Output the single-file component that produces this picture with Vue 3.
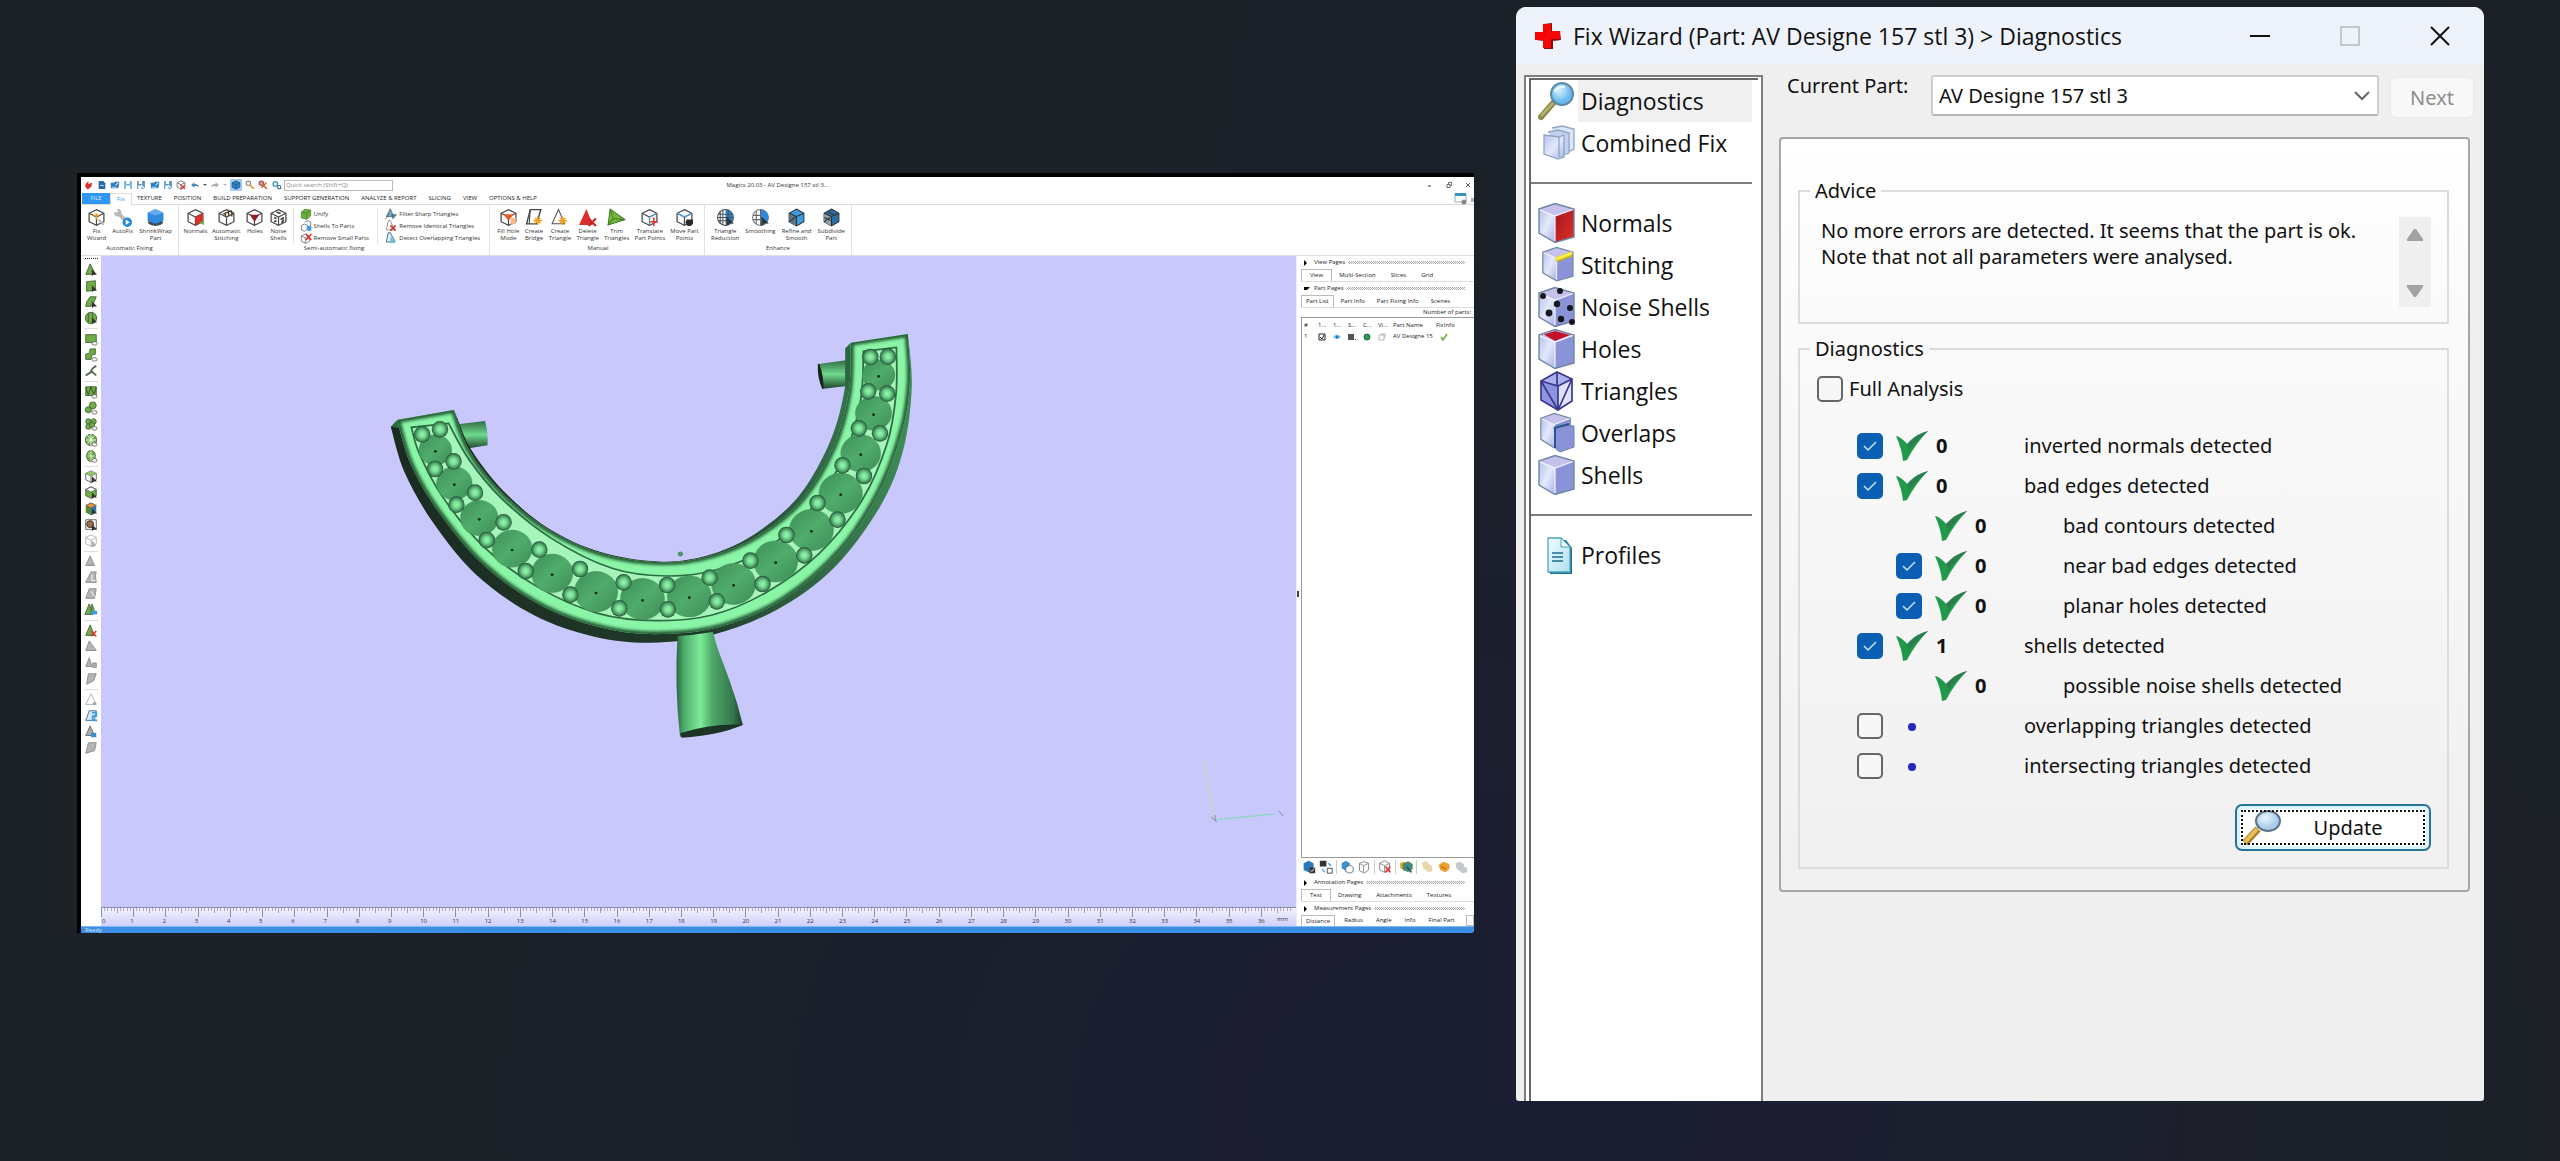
<script setup>
import { ref } from 'vue'

const part = ref('AV Designe 157 stl 3')

/* ---------- small ribbon glyphs, drawn on an 18 x 18 grid ---------- */
const box = '<path d="M9 1.5 16 5v8l-7 3.5L2 13V5z" fill="#fff" stroke="#4a4a4a" stroke-width="1.2"/><path d="M2 5l7 3.5L16 5M9 8.5v8" fill="none" stroke="#4a4a4a" stroke-width="1.2"/>'
const bluebox = '<path d="M9 1.5 16 5v8l-7 3.5L2 13V5z" fill="#2b86cf" stroke="#1c4e7a" stroke-width="1.2"/><path d="M2 5l7 3.5L16 5M9 8.5v8" fill="none" stroke="#1c4e7a" stroke-width="1.2"/>'
const star = '<path d="M12 8v8M8 12h8M9.500 9.500l5 5M14.500 9.500l-5 5" stroke="#f0a020" stroke-width="1.4"/>'
const arrow = '<path d="M10 8v9l3-2.500 4 .5z" fill="#333"/>'
const glyphs = {
  wizard: box + '<path d="M6 7h5M9 5v6" stroke="#f0a020" stroke-width="1.6"/><path d="M11 11l5 5" stroke="#bbb" stroke-width="2"/>',
  autofix: '<path d="M5 5l8 8" stroke="#b8b8b8" stroke-width="3.500"/><circle cx="4.500" cy="4.500" r="3.500" fill="#b8b8b8"/><path d="M3 0l2 4-5 0z" fill="#fff"/><circle cx="13.500" cy="13.500" r="4.500" fill="#2288d8"/><path d="M12 11l4 2.500-4 2.500z" fill="#fff"/>',
  shrink: '<ellipse cx="9" cy="13.500" rx="7" ry="3.500" fill="#3f4d58"/><path d="M1.500 4.500 9 1l7.500 3.500V12L9 15 1.500 12z" fill="#2f8be0"/><path d="M1.500 4.500 9 7l7.500-2.500L9 1z" fill="#64aef0"/>',
  normals: box + '<path d="M9 8.500 16 5v8l-7 3.500z" fill="#df2f28"/><path d="M12 14l5-2v4z" fill="#67b246"/>',
  stitch: box + '<path d="M6 5.500l8-3M8 8V4M11 8V4M14 8V3" stroke="#4b3a20" stroke-width="1.300"/>',
  holes: box + '<path d="M4.500 6.500h9L9 13z" fill="#8e1f26"/>',
  noise: box + '<path d="M5 9l2 1M5 13l2-1M11 11l3-2M12 14l2-3M7 4l4 1" stroke="#333" stroke-width="1.600"/>',
  fillhole: box + '<path d="M4 6h10l-5 6z" fill="#e0602a"/><path d="M11 10l5-1v6l-5 1z" fill="#f2b98c"/>',
  bridge: '<path d="M5 1.500h10L11 15H1.500z" fill="#fff" stroke="#444" stroke-width="1.300"/><path d="M5 1.500 4 15" stroke="#444"/>' + star,
  create: '<path d="M8 1.500 14 15H2z" fill="#fff" stroke="#555"/>' + star,
  del: '<path d="M8 1 14 16H1z" fill="#d9302c"/><path d="M10 10l7 7M17 10l-7 7" stroke="#c22" stroke-width="2"/>',
  trim: '<path d="M3 1 17 11 1 16z" fill="#78b83c" stroke="#3f7d28"/><path d="M3 1 6 10l11 1M6 10l-5 6" fill="none" stroke="#3f7d28"/>',
  translate: box + '<path d="M9 8.500 16 5M9 8.500V16" stroke="#4aa3d8"/><path d="M13 9v8M9 13h8" stroke="#df3a35" stroke-width="1.600"/>',
  move: box + '<path d="M9 8.500 16 5M2 5l7 3.500" stroke="#4aa3d8" stroke-width="1.300"/><path d="M11 11h6v4l-2 2h-3l-2-3z" fill="#2a2a2a"/>',
  reduction: '<circle cx="9" cy="9" r="7.500" fill="#fff" stroke="#444"/><path d="M9 1.500a7.500 7.500 0 010 15z" fill="#2b86cf"/><path d="M4 3v12M6.500 2v14M11.500 2v14M2 6h14M2 9h14M2 12h14" stroke="#44525c"/>' + arrow,
  smooth: '<circle cx="9" cy="9" r="7.500" fill="#fff" stroke="#777"/><path d="M9 1.500a7.500 7.500 0 010 15z" fill="#2b8ae0"/><path d="M5 3v12M9 1v16M2 7h7M2 11h7" stroke="#666"/>' + arrow,
  refine: '<path d="M9 1 16 5v8l-7 4-7-4V5z" fill="#3a9be6" stroke="#333"/><path d="M2 5l7 3v9l-7-4z" fill="#5b7788"/><path d="M2 5l7 3 7-3M9 8v9M2 13l7-5" fill="none" stroke="#333"/>',
  subdivide: '<path d="M9 1 16 5v8l-7 4-7-4V5z" fill="#2b6ea6" stroke="#333"/><path d="M2 5l7 3v9l-7-4z" fill="#8fa4b0"/><path d="M2 5l7 3 7-3M9 8v9M2 13l7-5M5 3l7 4M2 9l7 3" fill="none" stroke="#333"/>',
  unify: '<path d="M2 6l5-4 9 1v9l-6 5-8-2z" fill="#6cae3c" stroke="#3f7d28"/><path d="M2 6l8 2 6-5M10 8v9" fill="none" stroke="#3f7d28"/>',
  shells: '<path d="M2 8l5-2 4 2v6l-4 3-5-2zM7 3l5-2 4 2v6l-5 2" fill="#eef6fc" stroke="#555"/><path d="M11 9h6v7h-6z" fill="#3a9be6"/>',
  small: '<path d="M2 6l6-3 6 3v8l-6 3-6-3zM2 6l6 3 6-3M8 9v8" fill="#fff" stroke="#555"/><path d="M9 3l8 9M17 3l-8 9" stroke="#d9302c" stroke-width="2.400"/>',
  sharp: '<path d="M8 1 13 13H2z" fill="#76a9c8" stroke="#3c5666"/><path d="M1 17l5-9M10 10h7l-5 6z" stroke="#456" fill="#4d88ad"/>',
  identical: '<path d="M5 1h3l6 14H2z" fill="#fff" stroke="#567"/><path d="M8 8l8 8M16 8l-8 8" stroke="#d9302c" stroke-width="2.400"/>',
  overlap: '<path d="M5 1h3l7 14H2z" fill="#e9f5fb" stroke="#36758f" stroke-width="1.500"/><path d="M8 6l8 10H8z" fill="#74bcd6"/>',
  app: '<path d="M3 7l5-5v5l7-2-2 7-6 5-5-5z" fill="#d8332a"/>',
  doc: '<path d="M3 2h8l4 4v10H3z" fill="#2a6ca6"/><path d="M6 10h6" stroke="#fff" stroke-width="1.500"/>',
  open: '<path d="M1 5h6l2-2h8l-2 12H2z" fill="#2f7fc0"/><path d="M10 9l5-4M4 13h8" stroke="#bfe0f7" stroke-width="2"/>',
  save: '<path d="M2 2h14v14H2z" fill="#78b0dc"/><path d="M6 2h6v5H6zM5 10h8v6H5z" fill="#fff"/>',
  savex: '<path d="M2 2h14v14H2z" fill="#5d93bd"/><path d="M5 2h6v5H5zM4 10h6v6H4z" fill="#fff"/><path d="M9 9l7 7" stroke="#fff" stroke-width="2"/>',
  unload: box + '<path d="M9 9l7 7M16 9l-7 7" stroke="#df3a35" stroke-width="2"/>',
  undo: '<path d="M2 9l6-5v3c5 0 8 2 8 6-2-2-4-2-8-2v3z" fill="#3d87bd"/>',
  redo: '<path d="M16 9l-6-5v3c-5 0-8 2-8 6 2-2 4-2 8-2v3z" fill="#aaa"/>',
  pick: bluebox,
  key: '<circle cx="6" cy="6" r="4" fill="none" stroke="#888" stroke-width="2"/><path d="M9 9l7 7" stroke="#e8952e" stroke-width="3"/>',
  keyx: '<circle cx="6" cy="6" r="4" fill="#d98" stroke="#a55" stroke-width="2"/><path d="M6 14l9-9M9 9l7 7" stroke="#d55a2a" stroke-width="2.600"/>',
  gears: '<circle cx="6" cy="7" r="4" fill="none" stroke="#4a90bd" stroke-width="2.500"/><circle cx="13" cy="13" r="3" fill="none" stroke="#3b6f93" stroke-width="2"/>'
}

const quick = ['app', 'doc', 'open', 'save', 'savex', 'open', 'savex', 'unload']
const tabs = ['TEXTURE', 'POSITION', 'BUILD PREPARATION', 'SUPPORT GENERATION', 'ANALYZE & REPORT', 'SLICING', 'VIEW', 'OPTIONS & HELP']
const autoFixing = [['wizard', 'Fix', 'Wizard'], ['autofix', 'AutoFix', ''], ['shrink', 'ShrinkWrap', 'Part']]
const semi = [['normals', 'Normals', ''], ['stitch', 'Automatic', 'Stitching'], ['holes', 'Holes', ''], ['noise', 'Noise', 'Shells']]
const semiA = [['unify', 'Unify'], ['shells', 'Shells To Parts'], ['small', 'Remove Small Parts']]
const semiB = [['sharp', 'Filter Sharp Triangles'], ['identical', 'Remove Identical Triangles'], ['overlap', 'Detect Overlapping Triangles']]
const manual = [['fillhole', 'Fill Hole', 'Mode'], ['bridge', 'Create', 'Bridge'], ['create', 'Create', 'Triangle'], ['del', 'Delete', 'Triangle'], ['trim', 'Trim', 'Triangles'], ['translate', 'Translate', 'Part Points'], ['move', 'Move Part', 'Points']]
const enhance = [['reduction', 'Triangle', 'Reduction'], ['smooth', 'Smoothing', ''], ['refine', 'Refine and', 'Smooth'], ['subdivide', 'Subdivide', 'Part']]

/* ---------- left tool strip ---------- */
const G = 'fill="#6fae45" stroke="#44603a"'
const E = 'fill="#b4b4b4" stroke="#888"'
const cur = '<path d="M9 7v8l2-2 4 0z" fill="#333"/>'
const ring = '<ellipse cx="12" cy="13" rx="3" ry="2" fill="#fff" stroke="#666"/>'
const strip = [
  [`<path d="M7 1 13 13H2z" ${G}/>` + cur, `<path d="M3 3l10-1v11l-10 1z" ${G}/>` + cur, `<path d="M7 2h7l-3 7-3 4H2l1-5z" ${G}/>` + cur, `<circle cx="8" cy="8" r="6.500" ${G}/><path d="M5 2v12M10 2v12" stroke="#44603a"/>` + cur],
  [`<path d="M2 3h12v9H2z" ${G}/>` + ring, `<path d="M7 1h6v6l-4 1-1 5H2V7l4-1z" ${G}/>` + ring, '<path d="M14 2l-4 3-3 5-5 3M8 8l6 5" fill="none" stroke="#51604a" stroke-width="2"/>'],
  [`<path d="M2 2h12v10H2z" ${G}/><path d="M2 3l3 8 3-9 3 9 3-8" fill="none" stroke="#2f4a28"/>` + ring, `<circle cx="10" cy="5" r="4" ${G}/><circle cx="5" cy="10" r="3.500" ${G}/>` + ring, `<circle cx="5" cy="5" r="3" ${G}/><circle cx="11" cy="5" r="3" ${G}/><circle cx="5" cy="11" r="3" ${G}/><circle cx="9" cy="9" r="3" ${G}/>` + ring, `<circle cx="8" cy="8" r="6.500" ${G}/><path d="M8 1v14M2 8h12M4 3l8 9M12 3l-8 9" stroke="#fff"/>` + ring, `<ellipse cx="8" cy="8" rx="5" ry="6.500" ${G}/><path d="M8 1v14M4 8h9M5 4l6 8" stroke="#dfeccf"/>` + ring],
  ['<path d="M8 1l6 3v7l-6 3-6-3V4zM2 4l6 3 6-3M8 7v8" fill="#fff" stroke="#555"/><path d="M2 4l6-3 6 3-6 3z" fill="#8cc668"/>' + cur, '<path d="M8 1l6 3v7l-6 3-6-3V4z" fill="#6fae45" stroke="#44603a"/><path d="M8 1l6 3-6 3-6-3z" fill="#fff" stroke="#555"/>' + cur, '<path d="M2 4l6 3v8l-6-3z" fill="#568c32"/><path d="M14 4 8 7v8l6-3z" fill="#2b78b8"/><path d="M2 4l6-3 6 3-6 3z" fill="#e8923a" stroke="#555"/>' + cur, '<path d="M2 2h12v11H2z" fill="#fff" stroke="#555"/><circle cx="7" cy="7" r="4" fill="#a06a4a" stroke="#333"/>' + cur, '<path d="M8 1l6 3v7l-6 3-6-3V4zM2 4l6 3 6-3M8 7v8" fill="#fff" stroke="#aaa"/><path d="M9 7v8l5-2z" fill="#aaa"/>'],
  [`<path d="M7 1 12 12H2z" ${E}/>`, `<path d="M8 1h6l-1 4 1 8H2z" ${E}/><path d="M9 4v7h4" stroke="#fff" fill="none"/>`, `<path d="M6 2h8l-2 11H2z" ${E}/><path d="M8 5l4 6" stroke="#fff"/>`, '<path d="M6 1 10 13H1z" fill="#6fae45" stroke="#44603a"/><path d="M9 1l4 11H8z" fill="#6fae45" stroke="#44603a"/><path d="M9 9h6v4H8z" fill="#3a9be6"/>'],
  ['<path d="M7 1 12 13H2z" fill="#6fae45" stroke="#44603a"/><path d="M8 8l6 6M14 8l-6 6" stroke="#df3a35" stroke-width="2"/>', `<path d="M6 1 14 12H2z" ${E}/>`, `<path d="M6 2 9 12H2zM10 8h4v5h-4z" ${E}/>`, `<path d="M5 2h9l-3 8-8 4z" ${E}/>`],
  ['<path d="M8 1 14 13H2z" fill="#fff" stroke="#aaa"/><circle cx="12" cy="12" r="2" fill="#aaa"/>', '<path d="M6 2h8l-2 11H2z" fill="#dbe8f2" stroke="#3c6688"/><path d="M9 4h5v4h-4v5h5" fill="none" stroke="#3a9be6" stroke-width="2"/>', '<path d="M7 1 12 12H2z" fill="#aaa" stroke="#666"/><path d="M8 9h6v5H8z" fill="#3a8fd0"/>', `<path d="M5 2h9l-2 9-10 3z" ${E}/>`]
]

/* ---------- side-panel icon row ---------- */
const rowIcons = [
  ['<path d="M2 4l6-3 6 3v7l-6 4-6-3z" fill="#2b78b8"/><path d="M9 9h7v7H9z" fill="#333"/><path d="M10 12l2 2 3-4" stroke="#fff" fill="none"/>', '<path d="M1 1h8v7H1z" fill="#333"/><path d="M10 10h6v6h-6z" fill="#fff" stroke="#333"/><path d="M11 4l4 3M4 11l3 4" stroke="#3a9be6" stroke-width="1.500"/>'],
  ['<path d="M2 4l5-3 5 3v6l-5 3-5-3z" fill="#3a8fd0"/><path d="M7 9l5-3 4 3v5l-4 2-5-2z" fill="#fff" stroke="#3c6688"/>', '<path d="M3 4l5-2 6 2v8l-5 4-6-3zM3 4l5 3 6-3M8 7v8" fill="#fff" stroke="#777"/>'],
  ['<path d="M8 1l6 3v8l-6 3-6-3V4zM2 4l6 3 6-3M8 7v8" fill="#fff" stroke="#777"/><path d="M9 8l6 7M15 8l-6 7" stroke="#df3a35" stroke-width="2"/>'],
  ['<path d="M1 4l5-2 4 2v7H2z" fill="#d9a531"/><path d="M5 5l6-3 5 3v6l-5 3-6-2z" fill="#3c8f86" stroke="#5b7d3c"/><path d="M9 8l6 7" stroke="#356" stroke-width="2"/>'],
  ['<path d="M2 4l5-3 4 4 4 3v6l-5 1-6-5z" fill="#e9d7ac"/>', '<path d="M2 6l6-4 7 3v6l-5 4-6-3z" fill="#eda02f"/><path d="M5 8l6 3" stroke="#b56f12" stroke-width="1.500"/>', '<path d="M2 4l5-2 5 3v3l4 2v5l-6 1-7-6z" fill="#c5c9cc"/>']
]

/* ---------- jewellery model ---------- */
const spline = (pts) => {
  let d = ''
  for (let i = 0; i < pts.length - 1; i++) {
    const a = pts[Math.max(i - 1, 0)], b = pts[i], c = pts[i + 1], e = pts[Math.min(i + 2, pts.length - 1)]
    d += `C${b[0] + (c[0] - a[0]) / 6},${b[1] + (c[1] - a[1]) / 6} ${c[0] - (e[0] - b[0]) / 6},${c[1] - (e[1] - b[1]) / 6} ${c[0]},${c[1]}`
  }
  return d
}
const ringShape = (outer, inner) => `M${outer[0]}${spline(outer)}L${inner[0]}${spline(inner)}Z`
const outerFace = [[48, 300], [85, 430], [160, 570], [290, 735], [460, 862], [640, 928], [800, 942], [960, 918], [1130, 838], [1290, 690], [1400, 510], [1465, 320], [1484, 180], [1478, 42]]
const innerFace = [[1318, 68], [1312, 220], [1270, 380], [1180, 540], [1060, 645], [930, 706], [790, 727], [620, 700], [470, 628], [340, 515], [250, 390], [207, 270]]
const outerBody = [[30, 320], [70, 460], [150, 610], [270, 765], [430, 885], [600, 950], [760, 968], [930, 945], [1110, 870], [1270, 745], [1400, 560], [1465, 390], [1489, 200], [1478, 42]]
const innerBody = [[1303, 85], [1302, 200], [1262, 360], [1175, 525], [1055, 638], [930, 702], [790, 725], [620, 697], [470, 624], [345, 512], [256, 390], [215, 290]]
const channelOuter = [[88, 322], [110, 400], [175, 530], [290, 680], [440, 800], [610, 880], [775, 902], [930, 885], [1080, 818], [1230, 700], [1350, 540], [1420, 370], [1445, 220], [1446, 82]]
const channelInner = [[1354, 94], [1346, 240], [1305, 395], [1220, 550], [1090, 680], [940, 750], [800, 768], [650, 745], [480, 655], [340, 535], [250, 420], [192, 310]]
const body = ringShape(outerBody, innerBody)
const face = ringShape(outerFace, innerFace)
const channel = ringShape(channelOuter, channelInner)
const gems = [[155, 390, 46], [208, 490, 50], [278, 594, 53], [370, 686, 56], [482, 760, 58], [605, 815, 61], [735, 837, 62], [866, 829, 62], [990, 792, 62], [1108, 724, 62], [1208, 630, 62], [1290, 520, 61], [1346, 400, 56], [1382, 280, 51], [1396, 165, 46]]
const balls = [[118, 343], [168, 328], [154, 447], [206, 424], [214, 554], [266, 518], [299, 660], [346, 607], [408, 753], [446, 689], [533, 824], [560, 747], [670, 865], [682, 787], [806, 868], [804, 795], [943, 844], [923, 773], [1071, 792], [1037, 722], [1188, 706], [1138, 645], [1281, 599], [1225, 549], [1355, 468], [1295, 436], [1400, 340], [1341, 325], [1420, 221], [1367, 214], [1422, 110], [1373, 111]]

const marks = Array.from({ length: 37 }, (_, i) => i)

/* ---------- dialog ---------- */
const cube = (right, top) => `<path d="M1 6 17 13V39.500L1 30z" fill="url(#cubeL)"/><path d="M17 13 36 6V34L17 39.500z" fill="${right}"/><path d="M1 6 17 .5 36 6 17 13z" fill="${top}"/><path d="M1 6 17 .5 36 6V34L17 39.500 1 30z" fill="none" stroke="#6d86a0" stroke-width="1.400"/><path d="M2 7l15 6 18-6.500M17 13v25" fill="none" stroke="#f3f5ff" stroke-width="1.200"/>`
const side = {
  diag: '<path d="M3 36 16 21" stroke="#8d8a4d" stroke-width="6" stroke-linecap="round"/><path d="M3 35 15 22" stroke="#b9b574" stroke-width="2.500"/><circle cx="24" cy="13" r="11" fill="url(#lens)" stroke="#5e8aa6" stroke-width="2"/><path d="M17 11q3-6 10-5" stroke="#e9f8ff" stroke-width="2.500" fill="none"/>',
  combined: '<g stroke="#8fa6c4" stroke-width="1.300"><path d="M14 5l10-2 12 3v20l-6 3" fill="#dbe4f8"/><path d="M10 9l10-2 11 3v20l-8 3" fill="#c3cff0"/><path d="M6 12l15 2 5-2v22l-6 2-14-5z" fill="url(#cubeL)"/><path d="M21 14v20" fill="none"/></g>',
  normals: cube('url(#redFace)', '#c5c1ea'),
  stitching: '<g transform="translate(4 2) scale(.86)">' + cube('#8b93d8', '#c5c1ea') + '</g><path d="M18 15 34 9" stroke="#c9b51c" stroke-width="5"/><path d="M18 14 34 8" stroke="#f6ee4a" stroke-width="3"/>',
  noise: cube('#8b93d8', '#c5c1ea') + '<g fill="#15171c"><circle cx="5" cy="9" r="3"/><circle cx="22" cy="4" r="3"/><circle cx="19" cy="17" r="3.200"/><circle cx="11" cy="26" r="3.400"/><circle cx="32" cy="21" r="3"/><circle cx="23" cy="32" r="3.200"/><circle cx="34" cy="35" r="3"/></g>',
  holes: cube('#8b93d8', '#c5c1ea') + '<path d="M6 5.500 17 2l15 4-15 6z" fill="#c4122a"/>',
  triangles: '<path d="M3 10 19 1 34 8V30L20 39 3 29z" fill="#a9b2ee"/><path d="M3 10l17 5v24L3 29z" fill="#8c94e2"/><path d="M20 15l14-7v22L20 39z" fill="#dfe2fb"/><path d="M3 10 19 1 34 8V30L20 39 3 29zM3 10l17 5 14-7M20 15v24M3 10l17 29L34 8M19 1v14M3 29" fill="none" stroke="#3b378c" stroke-width="1.700"/>',
  overlaps: '<g transform="translate(2 0) scale(.84 .88)">' + cube('#8b93d8', '#c5c1ea') + '</g><path d="M16 14l4-2 16 1v21l-14 5-4-3z" fill="#8b93d8" stroke="#5f86b0" stroke-width="1"/><path d="M17 35V15l14-4" fill="none" stroke="#27548c" stroke-width="2"/>',
  shells: cube('#8b93d8', '#c5c1ea'),
  profiles: '<path d="M12 5h16l6 8v26H12z" fill="#1f6f8e"/><path d="M10 3h13l9 9v25H10z" fill="url(#page)" stroke="#4fa3bd" stroke-width="1.300"/><path d="M23 3v9h9z" fill="#f4fcff" stroke="#4fa3bd"/><path d="M14 18h11M14 22h11M14 26h11" stroke="#1d6d8c" stroke-width="1.700"/>'
}
const groups = [
  [['diag', 'Diagnostics'], ['combined', 'Combined Fix']],
  [['normals', 'Normals'], ['stitching', 'Stitching'], ['noise', 'Noise Shells'], ['holes', 'Holes'], ['triangles', 'Triangles'], ['overlaps', 'Overlaps'], ['shells', 'Shells']],
  [['profiles', 'Profiles']]
]
const full = ref(false)
const checks = ref([
  { label: 'inverted normals detected', n: '0', box: true, on: true },
  { label: 'bad edges detected', n: '0', box: true, on: true },
  { label: 'bad contours detected', n: '0', box: false, sub: true },
  { label: 'near bad edges detected', n: '0', box: true, on: true, sub: true },
  { label: 'planar holes detected', n: '0', box: true, on: true, sub: true },
  { label: 'shells detected', n: '1', box: true, on: true },
  { label: 'possible noise shells detected', n: '0', box: false, sub: true },
  { label: 'overlapping triangles detected', n: '', box: true, on: false },
  { label: 'intersecting triangles detected', n: '', box: true, on: false }
])
</script>

<template>
  <main class="desk">
    <section class="magics">
      <header class="caption">
        <div class="quick">
          <svg v-for="(q, i) in quick" :key="i" :class="{ gap: i === 5 }" viewBox="0 0 18 18" v-html="glyphs[q]" />
          <svg class="gap" viewBox="0 0 18 18" v-html="glyphs.undo" />
          <i class="caret"></i>
          <svg viewBox="0 0 18 18" v-html="glyphs.redo" />
          <i class="caret dim"></i>
          <span class="picked"><svg viewBox="0 0 18 18" v-html="glyphs.pick" /></span>
          <svg viewBox="0 0 18 18" v-html="glyphs.key" />
          <svg viewBox="0 0 18 18" v-html="glyphs.keyx" />
          <svg class="gap" viewBox="0 0 18 18" v-html="glyphs.gears" />
          <input class="search" type="text" aria-label="Quick search" placeholder="Quick search (Shift+Q)">
        </div>
        <h1>Magics 20.03 - AV Designe 157 stl 3...</h1>
        <div class="winbtns">
          <svg viewBox="0 0 8 8"><path d="M2 5h3" stroke="#333" /></svg>
          <svg viewBox="0 0 8 8"><path d="M2 3.500h3v3H2zM3.500 3V1.500h3v3H5" fill="none" stroke="#333" stroke-width=".7" /></svg>
          <svg viewBox="0 0 8 8"><path d="M2 2l4 4M6 2L2 6" stroke="#333" stroke-width=".8" /></svg>
        </div>
      </header>

      <nav class="tabs">
        <button class="file">FILE</button>
        <button class="active">Fix</button>
        <button v-for="t in tabs" :key="t">{{ t }}</button>
        <svg class="tabicon" viewBox="0 0 20 12"><path d="M1 1h11v8H1z" fill="#fff" stroke="#9ab" /><path d="M1 0h11v3H1z" fill="#3a93b8" /><circle cx="10" cy="9" r="2.500" fill="#888" /><path d="M17 6h3M17 8h3" stroke="#666" /></svg>
      </nav>

      <div class="ribbon">
        <section class="group g1">
          <div class="cmds">
            <button v-for="c in autoFixing" :key="c[0]"><svg viewBox="0 0 18 18" v-html="glyphs[c[0]]" /><span>{{ c[1] }}</span><span>{{ c[2] }}</span></button>
          </div>
          <h2>Automatic Fixing</h2>
        </section>
        <section class="group g2">
          <div class="parts">
            <div class="cmds">
              <button v-for="c in semi" :key="c[0]"><svg viewBox="0 0 18 18" v-html="glyphs[c[0]]" /><span>{{ c[1] }}</span><span>{{ c[2] }}</span></button>
            </div>
            <div class="rows">
              <button v-for="c in semiA" :key="c[0]"><svg viewBox="0 0 18 18" v-html="glyphs[c[0]]" />{{ c[1] }}</button>
            </div>
            <div class="rows">
              <button v-for="c in semiB" :key="c[0]"><svg viewBox="0 0 18 18" v-html="glyphs[c[0]]" />{{ c[1] }}</button>
            </div>
          </div>
          <h2>Semi-automatic fixing</h2>
        </section>
        <section class="group g3">
          <div class="cmds">
            <button v-for="c in manual" :key="c[0]"><svg viewBox="0 0 18 18" v-html="glyphs[c[0]]" /><span>{{ c[1] }}</span><span>{{ c[2] }}</span></button>
          </div>
          <h2>Manual</h2>
        </section>
        <section class="group g4">
          <div class="cmds">
            <button v-for="c in enhance" :key="c[0]"><svg viewBox="0 0 18 18" v-html="glyphs[c[0]]" /><span>{{ c[1] }}</span><span>{{ c[2] }}</span></button>
          </div>
          <h2>Enhance</h2>
        </section>
      </div>

      <div class="work">
        <aside class="strip">
          <i class="grip"></i>
          <div v-for="(g, i) in strip" :key="i" class="tools">
            <svg v-for="(s, j) in g" :key="j" viewBox="0 0 16 16" v-html="s" />
          </div>
        </aside>

        <div class="view">
          <svg class="scene" viewBox="0 0 1195 651" role="img" aria-label="3D part">
            <defs>
              <radialGradient id="ball"><stop offset="0" stop-color="#92f9ad" /><stop offset=".4" stop-color="#76dc94" /><stop offset=".8" stop-color="#438e5b" /><stop offset="1" stop-color="#1f4d33" /></radialGradient>
              <linearGradient id="gem" x1="0" y1="0" x2="1" y2="1"><stop offset="0" stop-color="#3f8f58" /><stop offset=".5" stop-color="#4fac6b" /><stop offset="1" stop-color="#3f8c57" /></linearGradient>
              <linearGradient id="cone" x1="0" x2="1"><stop offset="0" stop-color="#2b6640" /><stop offset=".12" stop-color="#4fae6c" /><stop offset=".36" stop-color="#7cec98" /><stop offset=".55" stop-color="#4da667" /><stop offset=".85" stop-color="#34774a" /><stop offset="1" stop-color="#1c3f29" /></linearGradient>
              <linearGradient id="pin" x1="0" y1="0" x2="0" y2="1"><stop offset="0" stop-color="#2f6b43" /><stop offset=".5" stop-color="#6fd98c" /><stop offset="1" stop-color="#1f452c" /></linearGradient>
              <linearGradient id="dark" x1="0" x2="1"><stop offset="0" stop-color="#1c2b22" /><stop offset=".6" stop-color="#203a2a" /><stop offset="1" stop-color="#3f8c58" /></linearGradient>
              <filter id="soft" x="-5%" y="-5%" width="110%" height="110%"><feGaussianBlur stdDeviation="4" /></filter>
              <clipPath id="faceClip"><path :d="face" /></clipPath>
            </defs>
            <svg x="279" y="64" width="560" height="430" viewBox="0 0 1568 1290" preserveAspectRatio="none">
              <path d="M222 312 294 303Q304 340 301 376L240 386Z" fill="url(#pin)" />
              <path d="M1228 132 1310 120V198L1240 206Q1227 170 1228 132Z" fill="url(#pin)" />
              <path d="M1228 132Q1240 166 1240 206Q1226 172 1228 132Z" fill="#16241b" stroke="#16241b" stroke-width="4" />
              <path :d="body" fill="url(#dark)" />
              <path d="M30 320 48 300 207 270 215 290 90 330Z" fill="#2d6b41" />
              <path d="M1303 85 1318 68V220L1302 200Z" fill="#2b6640" />
              <path :d="face" fill="#8af5a6" />
              <g clip-path="url(#faceClip)">
                <path :d="face" fill="none" stroke="#256139" stroke-width="18" filter="url(#soft)" />
              </g>
              <path :d="channel" fill="#a6f5ba" stroke="#2c6e42" stroke-width="5" />
              <g v-for="(g, i) in gems" :key="'g' + i">
                <circle :cx="g[0]" :cy="g[1]" :r="g[2]" fill="url(#gem)" stroke="#3f8c57" stroke-width="1" />
                <circle :cx="g[0]" :cy="g[1] + 4" r="4" fill="#0f2a18" />
              </g>
              <ellipse v-for="(b, i) in balls" :key="'b' + i" :cx="b[0]" :cy="b[1]" rx="23" ry="25" fill="url(#ball)" />
              <circle cx="841" cy="702" r="6" fill="#4faa6a" stroke="#245c38" stroke-width="2" />
              <path d="M833 948Q880 945 932 936C948 1000 962 1030 980 1085Q1002 1150 1016 1215Q930 1250 840 1250Q824 1100 833 948Z" fill="url(#cone)" />
              <path d="M840 1240Q925 1210 1016 1214Q950 1246 845 1253Z" fill="#1c3325" />
            </svg>
            <g fill="none">
              <path d="M1103 504l10 60" stroke="#d9cfc2" stroke-width="1.500" />
              <path d="M1113 564l60-6" stroke="#8fd7c4" stroke-width="1.500" />
              <path d="M1110 561l6 5M1114 559v6M1178 555l4 5" stroke="#8486b5" />
            </g>
          </svg>
          <div class="ruler">
            <span v-for="m in marks" :key="m">{{ m }}</span>
            <em>mm</em>
          </div>
        </div>

        <aside class="pages">
          <div class="phead"><i class="tri"></i>View Pages<i class="dots"></i></div>
          <div class="ptabs"><button class="on">View</button><button>Multi-Section</button><button>Slices</button><button>Grid</button></div>
          <div class="phead"><i class="tri down"></i>Part Pages<i class="dots"></i></div>
          <div class="ptabs tight"><button class="on">Part List</button><button>Part Info</button><button>Part Fixing Info</button><button>Scenes</button></div>
          <p class="count">Number of parts:</p>
          <div class="list">
            <table>
              <thead><tr><th>#</th><th>1...</th><th>1...</th><th>S...</th><th>C...</th><th>Vi...</th><th>Part Name</th><th>FixInfo</th></tr></thead>
              <tbody>
                <tr>
                  <td>1</td>
                  <td><svg viewBox="0 0 8 8"><path d="M1 1h6v6H1z" fill="#fff" stroke="#222" /><path d="M2 4l2 2 2-4" stroke="#222" fill="none" /></svg></td>
                  <td><svg viewBox="0 0 8 8"><path d="M0 4q4-5 8 0-4 4-8 0z" fill="#7cc3ee" /><circle cx="4" cy="4" r="1.500" fill="#1f79b8" /></svg></td>
                  <td><svg viewBox="0 0 8 8"><path d="M0 1h6v6H0z" fill="#555" /><path d="M7 6h1v1H7z" fill="#333" /></svg></td>
                  <td><svg viewBox="0 0 8 8"><circle cx="4" cy="4" r="3" fill="#2f9a5c" stroke="#1d5e3a" /></svg></td>
                  <td><svg viewBox="0 0 8 8"><path d="M1 2h5v5H1zM3 1h4v4" fill="none" stroke="#999" stroke-width=".7" /></svg></td>
                  <td>AV Designe 15</td>
                  <td><svg viewBox="0 0 8 8"><path d="M1 4l2 3 4-6" fill="none" stroke="#6db33f" stroke-width="1.600" /></svg></td>
                </tr>
              </tbody>
            </table>
          </div>
          <div class="prow">
            <div v-for="(g, i) in rowIcons" :key="i"><svg v-for="(s, j) in g" :key="j" viewBox="0 0 17 17" v-html="s" /></div>
          </div>
          <div class="phead"><i class="tri"></i>Annotation Pages<i class="dots"></i></div>
          <div class="ptabs"><button class="on">Text</button><button>Drawing</button><button>Attachments</button><button>Textures</button></div>
          <div class="phead"><i class="tri"></i>Measurement Pages<i class="dots"></i></div>
          <div class="ptabs last"><button class="on">Distance</button><button>Radius</button><button>Angle</button><button>Info</button><button>Final Part</button><i class="nav"></i></div>
        </aside>
      </div>
      <footer class="status">Ready</footer>
    </section>

    <section class="dialog" role="dialog" aria-labelledby="dlg-title">
      <svg width="0" height="0" class="defs">
        <defs>
          <linearGradient id="cubeL" x1="0" y1="0" x2="1" y2="1"><stop offset="0" stop-color="#b4c0ea" /><stop offset=".5" stop-color="#e3e9fb" /><stop offset="1" stop-color="#a7b3e4" /></linearGradient>
          <linearGradient id="redFace" x1="0" y1="0" x2="1" y2="1"><stop offset="0" stop-color="#a3161c" /><stop offset="1" stop-color="#e0302a" /></linearGradient>
          <radialGradient id="lens" cx=".4" cy=".35"><stop offset="0" stop-color="#d4f0ff" /><stop offset="1" stop-color="#69b9ec" /></radialGradient>
          <radialGradient id="lens2" cx=".4" cy=".35"><stop offset="0" stop-color="#eaf6ff" /><stop offset="1" stop-color="#a9cdea" /></radialGradient>
          <linearGradient id="page" x1="0" y1="0" x2="1" y2="1"><stop offset="0" stop-color="#f1fbfe" /><stop offset="1" stop-color="#aee0f0" /></linearGradient>
        </defs>
      </svg>
      <header class="dcap">
        <svg class="cross" viewBox="0 0 28 28"><path d="M10 2l8-1v8h8l1 9-8 1v8h-9v-8l-8-1v-8l8 0z" fill="#8e0a0a" /><path d="M9 2h8v7h9v8h-9v9H9v-8H1v-8h8z" fill="#f50505" /></svg>
        <h1 id="dlg-title">Fix Wizard (Part: AV Designe 157 stl 3) &gt; Diagnostics</h1>
        <button aria-label="Minimize"><svg viewBox="0 0 20 20"><path d="M0 10h20" stroke="#111" stroke-width="2" /></svg></button>
        <button aria-label="Maximize"><svg viewBox="0 0 20 20"><path d="M1 1h18v18H1z" fill="none" stroke="#c3c7ce" stroke-width="2" /></svg></button>
        <button aria-label="Close"><svg viewBox="0 0 20 20"><path d="M1 1l18 18M19 1L1 19" stroke="#111" stroke-width="2" /></svg></button>
      </header>

      <div class="dbody">
        <nav class="side">
          <ul v-for="(g, i) in groups" :key="i">
            <li v-for="it in g" :key="it[0]">
              <button :class="{ sel: it[0] === 'diag' }"><svg viewBox="0 0 37 40" v-html="side[it[0]]" /><span>{{ it[1] }}</span></button>
            </li>
          </ul>
        </nav>

        <div class="content">
          <div class="pick">
            <label for="part">Current Part:</label>
            <div class="combo">
              <select id="part" v-model="part"><option>AV Designe 157 stl 3</option></select>
              <svg viewBox="0 0 16 16"><path d="M1 4l7 7 7-7" fill="none" stroke="#666" stroke-width="2" /></svg>
            </div>
            <button class="next" disabled>Next</button>
          </div>

          <div class="panel">
            <fieldset class="advice">
              <legend>Advice</legend>
              <p>No more errors are detected. It seems that the part is ok.<br>Note that not all parameters were analysed.</p>
              <div class="scroll">
                <svg viewBox="0 0 16 12"><path d="M7 0h2l7 10v2H0v-2z" fill="#a2a2a2" /></svg>
                <svg viewBox="0 0 16 12"><path d="M7 12h2l7-10V0H0v2z" fill="#a2a2a2" /></svg>
              </div>
            </fieldset>

            <fieldset class="diag">
              <legend>Diagnostics</legend>
              <label class="full"><input v-model="full" type="checkbox">Full Analysis</label>
              <ul class="checks">
                <li v-for="(c, i) in checks" :key="i" :class="{ sub: c.sub }">
                  <span class="tick"><input v-if="c.box" :id="'c' + i" v-model="c.on" type="checkbox"></span>
                  <svg v-if="c.n" class="ok" viewBox="0 0 32 32"><path d="M0 6q2 0 6 3 4 3 5 5Q20 4 32 1 20 13 11 30L7 31Q6 19 0 6z" fill="#1f9a49" /><path d="M11 14Q20 4 32 1 22 9 13 20z" fill="#2c7f4c" /></svg>
                  <svg v-else class="ok" viewBox="0 0 32 32"><circle cx="16" cy="17" r="4" fill="#2327bd" /></svg>
                  <b>{{ c.n }}</b>
                  <label v-if="c.box" :for="'c' + i">{{ c.label }}</label>
                  <span v-else>{{ c.label }}</span>
                </li>
              </ul>
              <button class="update">
                <svg viewBox="0 0 40 38"><path d="M4 34 17 20" stroke="#a9802f" stroke-width="7" /><path d="M4 33 16 20" stroke="#e9bd57" stroke-width="4" /><ellipse cx="27" cy="12" rx="12" ry="10" fill="url(#lens2)" stroke="#5d7387" stroke-width="2" /></svg>
                <span>Update</span>
              </button>
            </fieldset>
          </div>
        </div>
      </div>
    </section>
  </main>
</template>

<style>
body { margin: 0; background: #1c2128; }
</style>

<style scoped>
* { box-sizing: border-box; }
button { font: inherit; color: inherit; border: 0; background: none; padding: 0; margin: 0; }
ul { list-style: none; margin: 0; padding: 0; }
h1, h2, p { margin: 0; font-weight: 400; }
svg { display: block; flex: none; }

.desk {
  display: grid;
  grid-template-columns: minmax(0, 1397fr) minmax(0, 968fr);
  gap: 42px;
  min-height: 100vh;
  padding: 7px 76px 60px 77px;
  background:
    radial-gradient(ellipse 45% 75% at 58% 95%, #1b1d32, rgba(27, 29, 50, 0)),
    linear-gradient(100deg, #1c2226, #1b2129 60%, #1c2126);
}

/* ---------- Magics window ---------- */
.magics {
  align-self: start;
  display: flex;
  flex-direction: column;
  margin-top: 166px;
  border: solid #000;
  border-width: 4px 0 0 4px;
  border-radius: 0 0 4px 0;
  overflow: hidden;
  background: #fff;
  color: #333;
  font: 6px/7px "Open Sans", "Noto Sans", sans-serif;
}
.caption { display: grid; grid-template-columns: 1fr auto 1fr; align-items: center; height: 16px; }
.caption h1 { font-size: 6px; color: #333; }
.quick { display: flex; align-items: center; gap: 3px; padding-left: 3px; }
.quick svg { width: 10px; height: 10px; }
.quick .gap { margin-left: 1px; }
.caret { border: solid transparent; border-width: 2px 2px 0; border-top-color: #555; }
.caret.dim { border-top-color: #bbb; }
.picked { padding: 1px; background: #a5cdf3; }
.search { width: 109px; height: 11px; margin-left: -1px; padding: 0 1px; border: 1px solid #bbb; font: inherit; outline: 0; }
.search::placeholder { color: #888; opacity: 1; }
.winbtns { display: flex; justify-content: flex-end; gap: 11px; padding-right: 2px; }
.winbtns svg { width: 8px; height: 8px; }

.tabs { display: flex; align-items: stretch; height: 12px; border-bottom: 1px solid #dcdcdc; color: #222; }
.tabs button { margin-right: 12px; }
.tabs .file { width: 28px; margin: 0 0 0 1px; background: #2e97f5; color: #d7ecff; }
.tabs .active { width: 22px; height: 12px; margin-right: 5px; border: 1px solid #dcdcdc; border-bottom: 0; background: #fff; color: #2e8fe0; }
.tabicon { width: 20px; height: 12px; margin-left: auto; }

.ribbon { display: flex; height: 51px; border-bottom: 1px solid #ddd; }
.group { display: flex; flex-direction: column; justify-content: space-between; flex: none; border-right: 1px solid #e2e2e2; padding: 3px 0; }
.group h2 { font-size: 6px; text-align: center; }
.g1 { width: 98px; }
.g2 { width: 311px; }
.g3 { width: 215px; padding-left: 2px; }
.g4 { width: 147px; }
.parts { display: flex; }
.cmds { display: flex; justify-content: space-evenly; }
.parts .cmds { width: 115px; border-right: 1px solid #e2e2e2; }
.cmds button { display: flex; flex-direction: column; align-items: center; }
.cmds svg { width: 19px; height: 19px; margin-bottom: 1px; }
.rows { display: flex; flex-direction: column; padding: 0 5px 0 6px; width: 84px; }
.rows + .rows { width: 112px; padding-left: 7px; border-left: 1px solid #e2e2e2; }
.rows button { display: flex; align-items: center; gap: 2px; height: 12px; white-space: nowrap; }
.rows svg { width: 12px; height: 12px; }

.work { display: flex; }
.strip { display: flex; flex-direction: column; align-items: center; width: 20px; padding-top: 2px; }
.grip { width: 13px; height: 1px; margin-bottom: 3px; background: repeating-linear-gradient(90deg, #222 0 1px, #fff 1px 2px); }
.tools + .tools { margin-top: 2px; padding-top: 2px; border-top: 1px solid #ddd; }
.tools svg { width: 14px; height: 16px; }

.view { display: flex; flex-direction: column; flex: 1; min-width: 0; background: #c8c8fd; }
.scene { width: 100%; height: auto; }
.ruler { position: relative; display: flex; height: 19px; padding-right: 3px; border-top: 1px solid #8b8bb0; background: linear-gradient(#f3f3ff, #cfcffb); color: #333; }
.ruler span {
  flex: 1 1 0;
  min-width: 0;
  height: 18px;
  padding-top: 10px;
  text-indent: -3px;
  background:
    linear-gradient(90deg, #8d8db2 1px, transparent 1px) 0 0 / 100% 9px no-repeat,
    linear-gradient(90deg, #9c9cc0 1px, transparent 1px) 16px 0 / 100% 5px no-repeat,
    repeating-linear-gradient(90deg, #a9a9cc 0 1px, transparent 1px 10%) 0 0 / 100% 3px no-repeat;
}
.ruler span:first-child { text-indent: 1px; }
.ruler em { position: absolute; right: 8px; top: 8px; font-style: normal; }

.pages { position: relative; display: flex; flex-direction: column; width: 178px; padding-left: 4px; border-left: 1px solid #eee; background: #fff; color: #222; }
.pages::before { content: ""; position: absolute; left: 0; top: 50%; width: 2px; height: 6px; background: #444; }
.phead { display: flex; align-items: center; gap: 3px; height: 13px; padding: 0 9px 0 3px; white-space: nowrap; }
.tri { margin-right: 4px; border: solid transparent; border-width: 3px 0 3px 3px; border-left-color: #000; }
.tri.down { border-width: 3px 3px 0; margin-right: 1px; border-top-color: #000; }
.dots { flex: 1; height: 3px; background: repeating-conic-gradient(#aaa 0 25%, #fff 0 50%) 0 0 / 2px 2px; }
.ptabs { display: flex; align-items: stretch; gap: 15px; height: 13px; border-bottom: 1px solid #ddd; white-space: nowrap; }
.ptabs .on { padding: 0 8px; margin-right: -8px; border: 1px solid #bbb; border-bottom: 0; }
.ptabs.tight { gap: 12px; }
.ptabs.tight .on { padding: 0 4px; margin-right: -5px; }
.ptabs.last { gap: 13px; height: 11px; border-bottom: 0; }
.ptabs.last .on { padding: 0 4px; margin-right: -4px; }
.nav { width: 8px; margin-left: -2px; border: 1px solid #bbb; }
.count { padding-right: 3px; text-align: right; line-height: 9px; }
.list { flex: 1; border: 1px solid #999; border-width: 1px 0 1px 1px; }
.list table { width: 100%; border-collapse: collapse; table-layout: fixed; margin-top: 2px; }
.list th, .list td { height: 11px; padding: 0 2px; font-weight: 400; text-align: left; overflow: hidden; white-space: nowrap; }
.list th:nth-child(1) { width: 14px; }
.list th:nth-child(n+2):nth-child(-n+6) { width: 15px; }
.list th:nth-child(7) { width: 45px; }
.list svg { width: 8px; height: 8px; }
.list th:last-child { padding-left: 0; }
.list td:last-child { padding-left: 4px; }
.prow { display: flex; align-items: center; height: 18px; }
.prow div { display: flex; gap: 3px; padding: 0 3px; }
.prow div + div { border-left: 1px solid #ccc; }
.prow div:first-child { padding-left: 1px; }
.prow svg { width: 14px; height: 14px; }
.status { height: 7px; padding-left: 4px; overflow: hidden; border-top: 1px solid #7db8f3; background: #3c8ee4; color: #cfe4fb; }

/* ---------- Fix Wizard dialog ---------- */
.dialog { display: flex; flex-direction: column; border-radius: 10px 10px 3px 3px; overflow: hidden; background: #efefef; color: #111; font: 20px/26px "Noto Sans", sans-serif; }
.defs { position: absolute; }
.dcap { display: flex; align-items: center; height: 58px; padding: 0 34px 0 18px; background: #eef3fb; }
.cross { width: 28px; height: 28px; }
.dcap h1 { flex: 1; margin-left: 11px; font: 23px/30px "Open Sans", "Noto Sans", sans-serif; white-space: nowrap; }
.dcap button { margin-left: 70px; }
.dcap button svg { width: 20px; height: 20px; }
.dbody { display: flex; flex: 1; padding: 10px 10px 0 8px; }

.side { display: flex; flex-direction: column; width: 239px; padding: 1px 3px 0; border: solid #7d7d7d; border-width: 2px 2px 0; background: #fff; font: 23px/30px "Open Sans", "Noto Sans", sans-serif; }
.side ul { border-left: 2px solid #666; padding-right: 6px; }
.side ul:first-child { border-top: 2px solid #666; }
.side ul:last-child { flex: 1; }
.side ul + ul { padding-top: 18px; }
.side ul + ul::before { content: ""; display: block; height: 2px; margin-bottom: 18px; background: #7d7d7d; }
.side button { display: flex; align-items: stretch; width: 100%; height: 42px; text-align: left; }
.side svg { width: 37px; height: 40px; margin: 1px 3px 0 7px; }
.side span { flex: 1; padding: 6px 3px; }
.side .sel span { background: #f0f0f0; }

.content { flex: 1; min-width: 0; padding-left: 16px; }
.pick { display: flex; align-items: flex-start; padding-left: 8px; }
.pick > label { width: 144px; line-height: 22px; }
.combo { position: relative; flex: 1; }
.combo select { width: 100%; height: 41px; padding: 0 6px; border: 2px solid #cfcfcf; border-bottom-color: #b5b5b5; border-radius: 3px; background: #fff; font: inherit; color: #111; appearance: none; }
.combo svg { position: absolute; right: 9px; top: 13px; width: 16px; height: 16px; pointer-events: none; }
.next { width: 84px; height: 41px; margin: 2px 0 0 11px; border: 1px solid #e8e8e8; border-radius: 6px; background: #f8f8f8; color: #8c8c8c; }

.panel { margin: 19px 4px 0 0; padding: 39px 19px 21px 17px; border: 2px solid #a6a6a6; border-radius: 4px; background: linear-gradient(#fff, #fafafa 25%, #f0f0f0); }
fieldset { margin: 0; border: 2px solid #dcdcdc; min-width: 0; }
legend { margin-left: 0; padding: 0 5px; }
.advice { display: flex; justify-content: space-between; padding: 13px 16px 15px 12px; }
.advice legend { margin-left: -2px; }
.advice p { padding: 1px 0 0 9px; white-space: nowrap; }
.scroll { display: flex; flex-direction: column; justify-content: space-between; align-items: center; width: 32px; height: 90px; padding: 12px 0 10px; background: #efefef; }
.scroll svg { width: 16px; height: 12px; }
.diag { margin-top: 12px; padding: 14px 16px 16px 17px; }
.diag legend { margin-left: -7px; }
.full { display: flex; align-items: center; gap: 6px; height: 26px; }
input[type="checkbox"] { appearance: none; width: 26px; height: 26px; margin: 0; border: 2px solid #666; border-radius: 5px; background: #f7f7f7; flex: none; }
input[type="checkbox"]:checked { border: 0; background: #0a5fb4 url("data:image/svg+xml,%3Csvg xmlns='http://www.w3.org/2000/svg' viewBox='0 0 26 26'%3E%3Cpath d='M7 13l4 4 8-8' fill='none' stroke='%23cfe3f6' stroke-width='1.500'/%3E%3C/svg%3E"); }
.checks { margin-top: 24px; padding-left: 40px; }
.checks li { display: flex; align-items: center; height: 40px; }
.checks .sub { padding-left: 39px; }
.tick { width: 39px; height: 26px; }
.ok { width: 32px; height: 32px; }
.checks b { width: 88px; padding-left: 8px; box-sizing: content-box; }
.update { display: flex; align-items: center; width: 196px; height: 47px; margin: 18px 0 0 auto; padding: 4px; border: 2px solid #2a7291; border-radius: 7px; background: #fff; box-shadow: inset 0 0 0 3px #d9f4fc; outline: 2px dotted #111; outline-offset: -8px; }
.update svg { width: 40px; height: 38px; }
.update span { flex: 1; padding-right: 10px; }
</style>
